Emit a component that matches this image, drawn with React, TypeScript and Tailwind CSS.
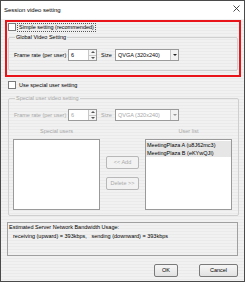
import React from 'react';

const Checkbox: React.FC = () => (
  <span className="block w-[8px] h-[8px] shrink-0 border border-[#7a7a7a] bg-white" />
);

const SpinInput: React.FC<{ value: string; disabled?: boolean }> = ({ value, disabled }) => (
  <div className="flex w-[29px] h-[12px] border border-[#9a9a9a] bg-white">
    <span className={`flex-1 pl-[2px] leading-[10px] ${disabled ? 'text-[#a8a8a8]' : 'text-black'}`}>{value}</span>
    <div className="flex flex-col w-[8px] border-l border-[#c8c8c8]">
      <div className="flex-1 flex items-center justify-center border-b border-[#c8c8c8] bg-[#f4f4f4]">
        <span className="block w-0 h-0 border-l-[2px] border-r-[2px] border-b-[2px] border-l-transparent border-r-transparent border-b-[#555]" />
      </div>
      <div className="flex-1 flex items-center justify-center bg-[#f4f4f4]">
        <span className="block w-0 h-0 border-l-[2px] border-r-[2px] border-t-[2px] border-l-transparent border-r-transparent border-t-[#555]" />
      </div>
    </div>
  </div>
);

const Combo: React.FC<{ value: string; disabled?: boolean }> = ({ value, disabled }) => (
  <div className="flex w-[64px] h-[12px] border border-[#9a9a9a] bg-white">
    <span className={`flex-1 pl-[2px] leading-[10px] ${disabled ? 'text-[#a8a8a8]' : 'text-black'}`}>{value}</span>
    <div className="w-[8px] flex items-center justify-center border-l border-[#c8c8c8] bg-[#f2f2f2]">
      <span
        className={`block w-0 h-0 border-l-[2px] border-r-[2px] border-t-[2px] border-l-transparent border-r-transparent ${
          disabled ? 'border-t-[#9a9a9a]' : 'border-t-[#222]'
        }`}
      />
    </div>
  </div>
);

const SettingRow: React.FC<{ disabled?: boolean }> = ({ disabled }) => {
  const tc = disabled ? 'text-[#a8a8a8]' : 'text-black';
  return (
    <div className="flex items-center h-[12px]">
      <span className={`w-[54px] ${tc}`}>Frame rate (per user)</span>
      <SpinInput value="6" disabled={disabled} />
      <span className={`ml-[4px] w-[14px] ${tc}`}>Size</span>
      <Combo value="QVGA (320x240)" disabled={disabled} />
    </div>
  );
};

const WinButton: React.FC<{ label: string; w: string; disabled?: boolean }> = ({ label, w, disabled }) => (
  <div
    className={`${w} h-[13px] flex items-center justify-center rounded-[2px] border ${
      disabled
        ? 'border-[#b8b8b8] bg-[#f2f2f2] text-[#a8a8a8]'
        : 'border-[#7a7a7a] bg-gradient-to-b from-[#f6f6f6] to-[#e2e2e2] text-black'
    }`}
  >
    {label}
  </div>
);

export default function App() {
  return (
    <div
      className="w-[245px] h-[282px] flex flex-col border border-[#4a4a4a] bg-[#eeeeee] text-[5.5px] leading-[7px] text-black"
      style={{ fontFamily: '"Liberation Sans", Arial, sans-serif' }}
    >
      {/* title bar */}
      <div className="h-[18px] shrink-0 bg-white flex items-center justify-between pl-[3px] pr-[4px]">
        <span className="text-[6px]">Session video setting</span>
        <svg width="7" height="7" viewBox="0 0 7 7" className="mb-[4px]">
          <path d="M0.5 0.5L6.5 6.5M6.5 0.5L0.5 6.5" stroke="#333" strokeWidth="0.9" />
        </svg>
      </div>

      <div className="flex-1 flex flex-col bg-[repeating-linear-gradient(180deg,#f1f1f1_0px,#f1f1f1_2px,#eaeaea_2px,#eaeaea_3px)]">
        {/* simple setting (highlighted) */}
        <div className="mt-[1px] ml-[4px] w-[236px] h-[57px] border-2 border-[#e8141a] flex flex-col">
          <div className="flex items-center mt-[1px] ml-[1px] h-[8px]">
            <Checkbox />
            <span className="ml-[1px] px-[1px] border border-dotted border-[#555] leading-[7px]">
              Simple setting (recommended)
            </span>
          </div>
          <fieldset className="mt-[3px] ml-[1px] w-[230px] h-[37px] border border-[#cfcfcf] rounded-[2px] px-[5px]">
            <legend className="ml-[1px] px-[1px] leading-[7px]">Global Video Setting</legend>
            <div className="mt-[8px]">
              <SettingRow />
            </div>
          </fieldset>
        </div>

        {/* special user setting */}
        <div className="flex items-center mt-[4px] ml-[7px] h-[8px]">
          <Checkbox />
          <span className="ml-[3px]">Use special user setting</span>
        </div>

        <fieldset className="mt-[6px] ml-[7px] w-[231px] h-[121px] border border-[#cfcfcf] rounded-[2px] px-[5px]">
          <legend className="ml-[1px] px-[1px] leading-[7px] text-[#a8a8a8]">Special user video setting</legend>
          <div className="mt-[7px]">
            <SettingRow disabled />
          </div>
          <div className="flex mt-[7px] ml-[-1px] text-[#a8a8a8]">
            <span className="w-[87px] text-center">Special users</span>
            <span className="ml-[45px] w-[87px] text-center">User list</span>
          </div>
          <div className="flex mt-[4px] ml-[-1px]">
            <div className="w-[87px] h-[71px] border border-[#9a9a9a] bg-white" />
            <div className="w-[45px] flex flex-col items-center pt-[17px] gap-[8px]">
              <WinButton label="<< Add" w="w-[33px]" disabled />
              <WinButton label="Delete >>" w="w-[33px]" disabled />
            </div>
            <div className="w-[87px] h-[71px] border border-[#9a9a9a] bg-white flex flex-col pt-[1px]">
              <div className="h-[8px] bg-[#e6e6e6] pl-[1px] leading-[8px]">MeetingPlaza A (u8J62mc3)</div>
              <div className="h-[8px] bg-[#e6e6e6] pl-[1px] leading-[8px]">MeetingPlaza B (eKYwQJI)</div>
            </div>
          </div>
        </fieldset>

        {/* bandwidth estimate */}
        <div className="mt-[6px] ml-[6px] w-[231px] h-[34px] border border-[#a0a0a0] pl-[1px] pt-[1px]">
          <div>Estimated Server Network Bandwidth Usage:</div>
          <div className="pl-[4px] mt-[2px]">receiving (upward) = 393kbps,&nbsp;&nbsp; sending (downward) = 393kbps</div>
        </div>

        {/* dialog buttons */}
        <div className="flex mt-[8px] ml-[153px]">
          <WinButton label="OK" w="w-[24px]" />
          <div className="ml-[21px]">
            <WinButton label="Cancel" w="w-[39px]" />
          </div>
        </div>
      </div>
    </div>
  );
}
